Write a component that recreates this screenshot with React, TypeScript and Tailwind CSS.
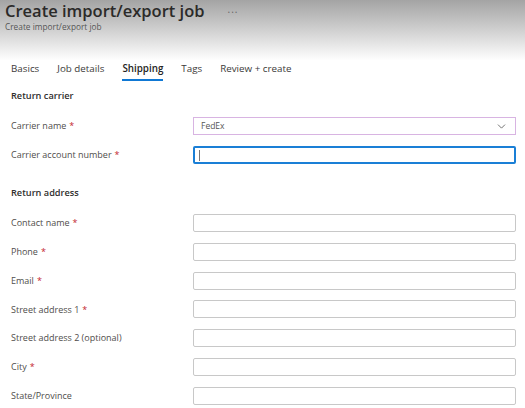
import { ChevronDown } from 'lucide-react';

const addressFields = [
  { label: 'Contact name', required: true },
  { label: 'Phone', required: true },
  { label: 'Email', required: true },
  { label: 'Street address 1', required: true },
  { label: 'Street address 2 (optional)', required: false },
  { label: 'City', required: true },
  { label: 'State/Province', required: false },
];

const tabs = ['Basics', 'Job details', 'Shipping', 'Tags', 'Review + create'];

function Label({ text, required }: { text: string; required: boolean }) {
  return (
    <div className="w-[182px] shrink-0 text-[9px] text-[#4f4d4b]">
      {text}
      {required && <span className="ml-[3px] text-[#c4262e]">*</span>}
    </div>
  );
}

export default function App() {
  return (
    <div
      className="w-[525px] h-[408px] overflow-hidden bg-white"
      style={{ fontFamily: '"Open Sans", "Noto Sans", sans-serif' }}
    >
      <div className="h-[60px] bg-gradient-to-b from-[#a4a4a4] to-[#fefefe] px-[5px]">
        <div className="flex items-center gap-[23px]">
          <h1 className="text-[16.5px] leading-[22px] font-semibold text-[#2b2a29]">
            Create import/export job
          </h1>
          <span className="text-[10px] text-[#666] tracking-[1px] -mt-[4px]">...</span>
        </div>
        <div className="text-[8.3px] leading-[10px] text-[#555]">Create import/export job</div>
      </div>

      <div className="flex items-end gap-[18px] px-[11px] h-[20px]">
        {tabs.map((t) => (
          <div key={t} className="relative pb-[2px]">
            <span
              className={
                t === 'Shipping'
                  ? 'text-[9.8px] font-semibold text-[#252423]'
                  : 'text-[9.8px] text-[#3b3a39]'
              }
            >
              {t}
            </span>
            {t === 'Shipping' && (
              <div className="absolute left-0 right-0 bottom-[-1px] h-[2px] bg-[#0f78d4]" />
            )}
          </div>
        ))}
      </div>

      <div className="pl-[11px] pr-[9px] pt-[9px]">
        <div className="text-[9.2px] font-semibold text-[#2f2e2d] leading-[14px]">Return carrier</div>

        <div className="mt-[14px] flex flex-col gap-[11px]">
          <div className="flex items-center h-[18px]">
            <Label text="Carrier name" required />
            <div className="flex-1 h-[18px] border border-[#d8b4e2] flex items-center justify-between px-[7px]">
              <span className="text-[8.5px] text-[#555]">FedEx</span>
              <ChevronDown className="w-[13px] h-[13px] text-[#555]" strokeWidth={1.5} />
            </div>
          </div>
          <div className="flex items-center h-[18px]">
            <Label text="Carrier account number" required />
            <div className="flex-1 h-[18px] border-2 border-[#1a7fd6] rounded-[2px] flex items-center px-[4px]">
              <div className="w-px h-[11px] bg-[#777]" />
            </div>
          </div>
        </div>

        <div className="mt-[22px] text-[9.2px] font-semibold text-[#2f2e2d] leading-[14px]">Return address</div>

        <div className="mt-[14px] flex flex-col gap-[10.75px]">
          {addressFields.map((f) => (
            <div key={f.label} className="flex items-center h-[18px]">
              <Label text={f.label} required={f.required} />
              <div className="flex-1 h-[18px] border border-[#c8c8c8] rounded-[2px]" />
            </div>
          ))}
        </div>
      </div>
    </div>
  );
}
